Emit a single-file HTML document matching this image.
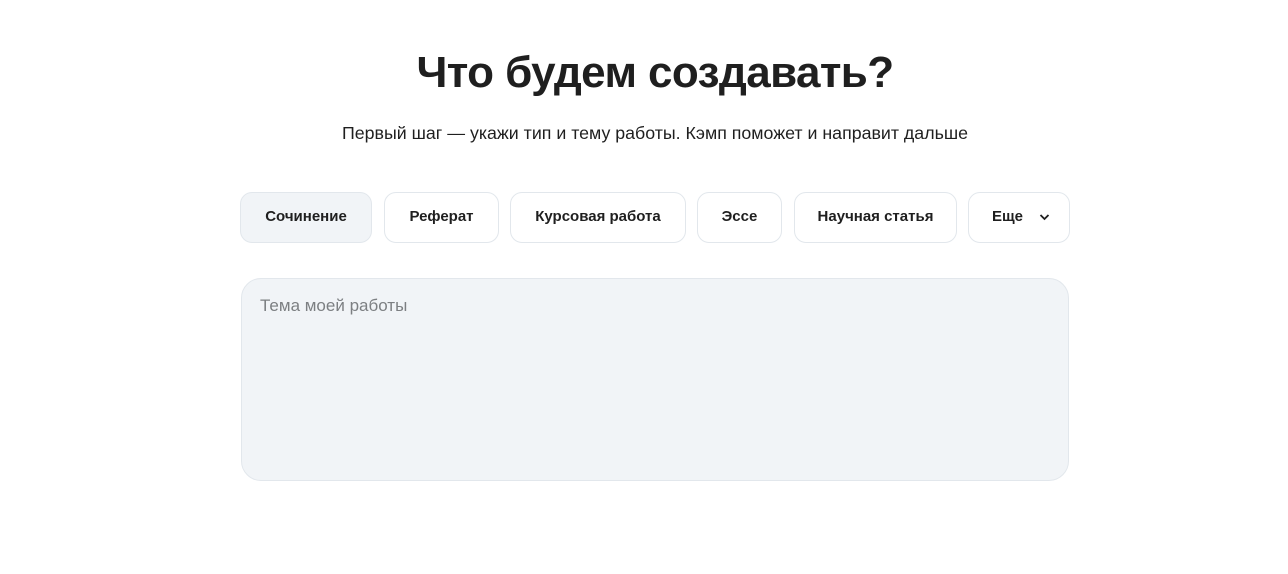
<!DOCTYPE html>
<html><head><meta charset="utf-8"><style>
body{margin:0;background:#fff;font-family:"Liberation Sans","DejaVu Sans",sans-serif;color:#1f1f1f;width:1288px;height:574px;position:relative;overflow:hidden}
h1{position:absolute;top:45px;left:0;width:1310px;margin:0;text-align:center;font-size:44px;font-weight:700;letter-spacing:-0.6px;line-height:56px}
.sub{position:absolute;top:122px;left:0;width:1310px;text-align:center;font-size:17.8px;line-height:22px}
.b{position:absolute;top:192px;border:1px solid #e2e7ec;border-radius:12px;background:#fff;font-size:15px;font-weight:700;display:flex;align-items:center;justify-content:center;box-sizing:border-box;height:51px;padding-bottom:2px}
.b.a{background:#f1f4f7}
.ta{position:absolute;left:241px;top:278px;width:828px;height:203px;box-sizing:border-box;border:1px solid #e2e7ec;border-radius:20px;background:#f1f4f7}
.ta span{position:absolute;left:18px;top:17px;font-size:17px;color:#7c7f82}
</style></head><body>
<h1>Что будем создавать?</h1>
<div class="sub">Первый шаг — укажи тип и тему работы. Кэмп поможет и направит дальше</div>
<div class="b a" style="left:240px;width:132px">Сочинение</div>
<div class="b" style="left:384px;width:115px">Реферат</div>
<div class="b" style="left:510px;width:176px">Курсовая работа</div>
<div class="b" style="left:697px;width:85px">Эссе</div>
<div class="b" style="left:794px;width:163px">Научная статья</div>
<div class="b" style="left:968px;width:102px;justify-content:flex-start;padding-left:23px">Еще<svg style="margin-left:16px" width="11" height="8" viewBox="0 0 11 8"><path d="M1.5 2l4 4 4-4" fill="none" stroke="#1f1f1f" stroke-width="1.8"/></svg></div>
<div class="ta"><span>Тема моей работы</span></div>
</body></html>
